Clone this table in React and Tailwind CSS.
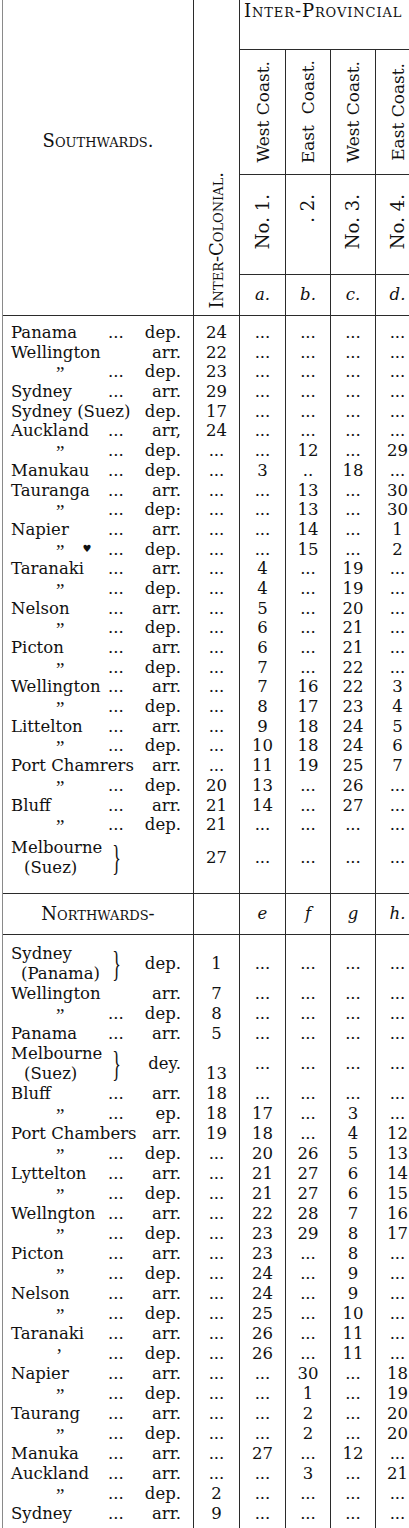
import React from "react";

const D = "...";
const cols = "grid grid-cols-[191px_46px_46px_45px_45px_44px]";
const line = "border-r border-[#2b2b2b]";

const south = [
  { n: "Panama", dots: true, t: "dep.", v: ["24", D, D, D, D] },
  { n: "Wellington", t: "arr.", v: ["22", D, D, D, D] },
  { dots: true, t: "dep.", v: ["23", D, D, D, D] },
  { n: "Sydney", dots: true, t: "arr.", v: ["29", D, D, D, D] },
  { n: "Sydney (Suez)", t: "dep.", v: ["17", D, D, D, D] },
  { n: "Auckland", dots: true, t: "arr,", v: ["24", D, D, D, D] },
  { dots: true, t: "dep.", v: [D, D, "12", D, "29"] },
  { n: "Manukau", dots: true, t: "dep.", v: [D, "3", "..", "18", D] },
  { n: "Tauranga", dots: true, t: "arr.", v: [D, D, "13", D, "30"] },
  { dots: true, t: "dep:", v: [D, D, "13", D, "30"] },
  { n: "Napier", dots: true, t: "arr.", v: [D, D, "14", D, "1"] },
  { dots: true, blot: true, t: "dep.", v: [D, D, "15", D, "2"] },
  { n: "Taranaki", dots: true, t: "arr.", v: [D, "4", D, "19", D] },
  { dots: true, t: "dep.", v: [D, "4", D, "19", D] },
  { n: "Nelson", dots: true, t: "arr.", v: [D, "5", D, "20", D] },
  { dots: true, t: "dep.", v: [D, "6", D, "21", D] },
  { n: "Picton", dots: true, t: "arr.", v: [D, "6", D, "21", D] },
  { dots: true, t: "dep.", v: [D, "7", D, "22", D] },
  { n: "Wellington", dots: true, t: "arr.", v: [D, "7", "16", "22", "3"] },
  { dots: true, t: "dep.", v: [D, "8", "17", "23", "4"] },
  { n: "Littelton", dots: true, t: "arr.", v: [D, "9", "18", "24", "5"] },
  { dots: true, t: "dep.", v: [D, "10", "18", "24", "6"] },
  { n: "Port Chamrers", t: "arr.", v: [D, "11", "19", "25", "7"] },
  { dots: true, t: "dep.", v: ["20", "13", D, "26", D] },
  { n: "Bluff", dots: true, t: "arr.", v: ["21", "14", D, "27", D] },
  { dots: true, t: "dep.", v: ["21", D, D, D, D] },
];

const northA = [
  { n: "Wellington", t: "arr.", v: ["7", D, D, D, D] },
  { dots: true, t: "dep.", v: ["8", D, D, D, D] },
  { n: "Panama", dots: true, t: "arr.", v: ["5", D, D, D, D] },
];

const northB = [
  { n: "Bluff", dots: true, t: "arr.", v: ["18", D, D, D, D] },
  { dots: true, t: "ep.", v: ["18", "17", D, "3", D] },
  { n: "Port Chambers", t: "arr.", v: ["19", "18", D, "4", "12"] },
  { dots: true, t: "dep.", v: [D, "20", "26", "5", "13"] },
  { n: "Lyttelton", dots: true, t: "arr.", v: [D, "21", "27", "6", "14"] },
  { dots: true, t: "dep.", v: [D, "21", "27", "6", "15"] },
  { n: "Wellngton", dots: true, t: "arr.", v: [D, "22", "28", "7", "16"] },
  { dots: true, t: "dep.", v: [D, "23", "29", "8", "17"] },
  { n: "Picton", dots: true, t: "arr.", v: [D, "23", D, "8", D] },
  { dots: true, t: "dep.", v: [D, "24", D, "9", D] },
  { n: "Nelson", dots: true, t: "arr.", v: [D, "24", D, "9", D] },
  { dots: true, t: "dep.", v: [D, "25", D, "10", D] },
  { n: "Taranaki", dots: true, t: "arr.", v: [D, "26", D, "11", D] },
  { dots: true, mark: "’", t: "dep.", v: [D, "26", D, "11", D] },
  { n: "Napier", dots: true, t: "arr.", v: [D, D, "30", D, "18"] },
  { dots: true, t: "dep.", v: [D, D, "1", D, "19"] },
  { n: "Taurang", dots: true, t: "arr.", v: [D, D, "2", D, "20"] },
  { dots: true, t: "dep.", v: [D, D, "2", D, "20"] },
  { n: "Manuka", dots: true, t: "arr.", v: [D, "27", D, "12", D] },
  { n: "Auckland", dots: true, t: "arr.", v: [D, D, "3", D, "21"] },
  { dots: true, t: "dep.", v: ["2", D, D, D, D] },
  { n: "Sydney", dots: true, t: "arr.", v: ["9", D, D, D, D] },
];

function Station({ r }) {
  return (
    <div className={`grid grid-cols-[97px_33px_1fr] items-center whitespace-nowrap pl-2 pr-3 ${line}`}>
      <span>
        {r.n ?? (
          <span className="inline-block translate-y-[3px] pl-[45px] font-['Liberation_Serif',serif] text-[19px] leading-[16px]">
            {r.mark ?? "”"}
          </span>
        )}
        {r.blot && <span className="inline-block -translate-y-[3px] pl-[18px] text-[10px] leading-[10px]">♥</span>}
      </span>
      <span>{r.dots ? D : ""}</span>
      <span className="text-right">{r.t}</span>
    </div>
  );
}

function Row({ r, h }) {
  return (
    <div className={`${cols} ${h}`}>
      <Station r={r} />
      {r.v.map((x, i) => (
        <div key={i} className={`flex items-center justify-center ${line}`}>
          {x}
        </div>
      ))}
    </div>
  );
}

function Spacer({ h }) {
  return (
    <div className={`${cols} ${h}`}>
      {[0, 1, 2, 3, 4, 5].map((i) => (
        <div key={i} className={line} />
      ))}
    </div>
  );
}

function Brace() {
  return (
    <span className="inline-block scale-x-[0.5] font-['Liberation_Serif',serif] text-[36px] leading-[40px]">
      {"}"}
    </span>
  );
}

function DoubleRow({ top, bottom, indent, t, v, h, pad, icEnd }) {
  return (
    <div className={`${cols} ${h}`}>
      <div className={`pl-2 pr-3 ${pad} ${line}`}>
        <div className="flex h-[40px] items-center whitespace-nowrap">
          <div className="flex w-[97px] flex-col">
            <span>{top}</span>
            <span className={indent}>{bottom}</span>
          </div>
          <Brace />
          <span className="ml-auto">{t}</span>
        </div>
      </div>
      {v.map((x, i) => (
        <div key={i} className={`${pad} ${line}`}>
          <div
            className={`flex h-[40px] justify-center ${
              i === 0 && icEnd ? "items-end" : "items-center"
            }`}
          >
            {x}
          </div>
        </div>
      ))}
    </div>
  );
}

const rot = "[writing-mode:vertical-rl] rotate-180";
const sc = "[font-variant:small-caps]";

function Header() {
  const coasts = ["West Coast.", "East  Coast.", "West Coast.", "East Coast."];
  const letters = ["a.", "b.", "c.", "d."];
  return (
    <div className={`${cols} grid-rows-[50px_125px_100px_40px] border-b border-[#2b2b2b]`}>
      <div className={`row-span-4 flex justify-center pt-[131px] text-[18px] ${sc} ${line}`}>
        Southwards.
      </div>
      <div className={`row-span-4 flex items-end justify-center pb-[7px] ${line}`}>
        <span className={`${rot} ${sc} text-[18px] leading-[22px]`}>Inter-Colonial.</span>
      </div>
      <div
        className={`col-span-4 whitespace-nowrap border-b border-[#2b2b2b] pl-[4px] pt-[1px] text-[18px] tracking-[0.05em] ${sc}`}
      >
        Inter-Provincial
      </div>
      {coasts.map((c) => (
        <div key={c} className={`flex items-center justify-center border-b border-[#2b2b2b] ${line}`}>
          <span className={`${rot} whitespace-pre text-[17px] leading-[20px]`}>{c}</span>
        </div>
      ))}
      {[1, 2, 3, 4].map((n) => (
        <div
          key={n}
          className={`flex items-center justify-center border-b border-[#2b2b2b] pb-[6px] ${line}`}
        >
          <span className={`${rot} whitespace-pre text-[18px] leading-[20px]`}>
            {n === 2 ? <span className="text-transparent">No</span> : "No"}. {n}.
          </span>
        </div>
      ))}
      {letters.map((l) => (
        <div key={l} className={`flex items-center justify-center italic ${line}`}>
          {l}
        </div>
      ))}
    </div>
  );
}

export default function App() {
  return (
    <div className="h-[1528px] w-[409px] overflow-hidden bg-white pl-[2px] font-['DejaVu_Serif',serif] text-[16.5px] leading-[20px] text-[#111]">
      <div className="w-[419px] border-l border-[#8a8a8a]">
        <Header />
        <Spacer h="h-[7px]" />
        {south.map((r, i) => (
          <Row key={i} r={r} h="h-[19.7px]" />
        ))}
        <DoubleRow
          top="Melbourne"
          bottom="(Suez)"
          indent="pl-[13px]"
          t=""
          v={["27", D, D, D, D]}
          h="h-[58px]"
          pad="pt-[3px]"
        />
        <div className={`${cols} h-[42px] border-y border-[#2b2b2b]`}>
          <div className={`flex items-center justify-center text-[18px] ${sc} ${line}`}>
            Northwards-
          </div>
          <div className={line} />
          {["e", "f", "g", "h."].map((l) => (
            <div key={l} className={`flex items-center justify-center italic ${line}`}>
              {l}
            </div>
          ))}
        </div>
        <Spacer h="h-[9px]" />
        <DoubleRow
          top="Sydney"
          bottom="(Panama)"
          indent="pl-[10px]"
          t="dep."
          v={["1", D, D, D, D]}
          h="h-[40px]"
          pad=""
        />
        {northA.map((r, i) => (
          <Row key={i} r={r} h="h-5" />
        ))}
        <DoubleRow
          top="Melbourne"
          bottom="(Suez)"
          indent="pl-[13px]"
          t="dey."
          v={["13", D, D, D, D]}
          h="h-[40px]"
          pad=""
          icEnd
        />
        {northB.map((r, i) => (
          <Row key={i} r={r} h="h-5" />
        ))}
        <Spacer h="h-[20px]" />
      </div>
    </div>
  );
}
